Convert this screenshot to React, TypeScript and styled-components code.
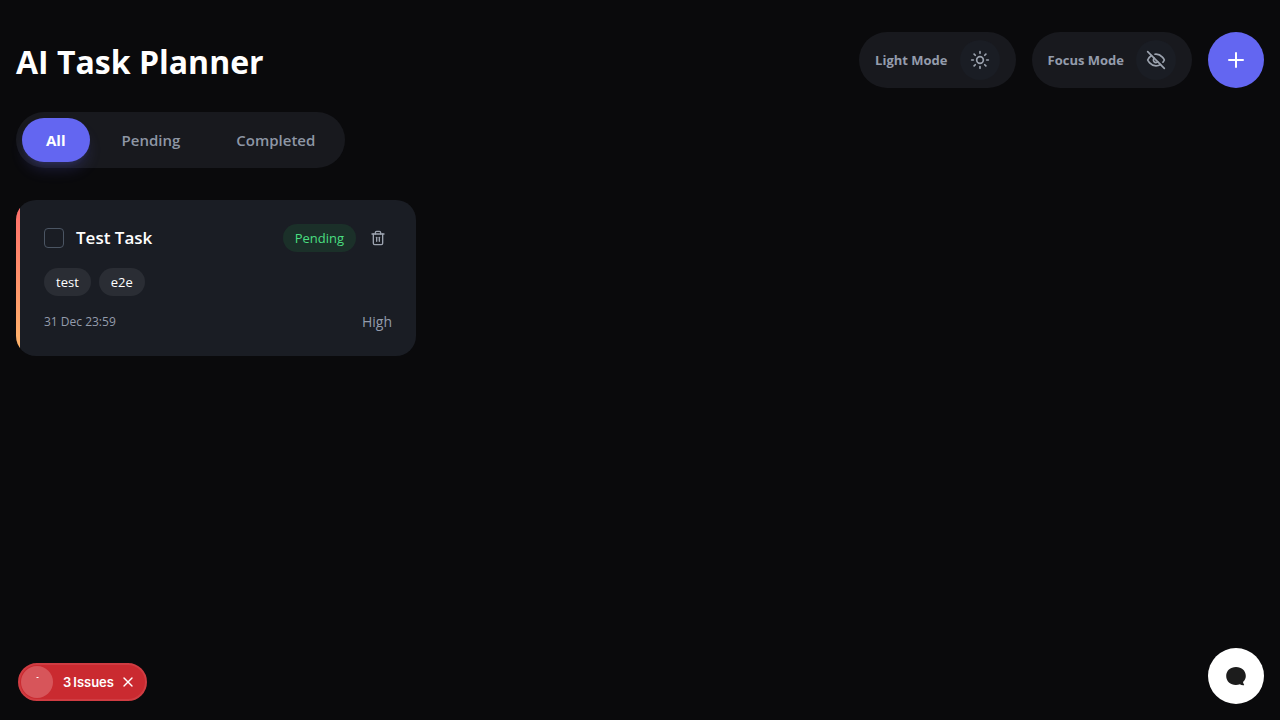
import React, { useState } from "react";
import styled, { createGlobalStyle } from "styled-components";
import { Plus, Sun, Trash2, X } from "lucide-react";

const GlobalStyle = createGlobalStyle`
  *, *::before, *::after { box-sizing: border-box; }
  body {
    margin: 0;
    background: #0a0a0c;
    color: #ffffff;
    font-family: "Segoe UI", "Open Sans", "Noto Sans", sans-serif;
    font-size: 16px;
  }
  button, input { font: inherit; color: inherit; }
  button { border: 0; padding: 0; background: none; cursor: pointer; }
`;

const Page = styled.main`
  padding: 32px 16px;
`;

const Header = styled.header`
  display: flex;
  align-items: center;
  justify-content: space-between;
  gap: 16px;
  margin-bottom: 24px;
`;

const Title = styled.h1`
  margin: 0;
  padding-top: 4px;
  font-size: 32px;
  line-height: 40px;
  font-weight: 700;
`;

const Actions = styled.div`
  display: flex;
  gap: 16px;
`;

const ModeToggle = styled.div`
  display: flex;
  align-items: center;
  gap: 12px;
  height: 56px;
  padding: 0 16px;
  border-radius: 28px;
  background: #18191e;
`;

const ModeLabel = styled.label`
  color: #949cac;
  font-size: 13px;
  line-height: 20px;
  font-weight: 700;
`;

const ModeButton = styled.button`
  display: grid;
  place-items: center;
  width: 40px;
  height: 40px;
  border-radius: 50%;
  background: #1a1d24;
  color: #9ca3af;
`;

const AddButton = styled.button`
  display: grid;
  place-items: center;
  width: 56px;
  height: 56px;
  border-radius: 50%;
  background: #6366f1;
`;

const Tabs = styled.nav`
  display: flex;
  width: fit-content;
  gap: 8px;
  padding: 6px;
  border-radius: 28px;
  background: #18191e;
`;

const Tab = styled.button<{ $active: boolean }>`
  height: 44px;
  padding: 0 24px;
  border-radius: 22px;
  font-size: 15px;
  font-weight: ${(p) => (p.$active ? 700 : 600)};
  color: ${(p) => (p.$active ? "#ffffff" : "#8e96a5")};
  background: ${(p) => (p.$active ? "#6366f1" : "transparent")};
  box-shadow: ${(p) =>
    p.$active
      ? "0 10px 15px -3px rgba(99, 102, 241, 0.2), 0 4px 6px -4px rgba(99, 102, 241, 0.2)"
      : "none"};
`;

const TaskGrid = styled.section`
  display: grid;
  grid-template-columns: repeat(auto-fill, minmax(360px, 1fr));
  gap: 24px;
  margin-top: 32px;
`;

const Card = styled.article`
  position: relative;
  overflow: hidden;
  padding: 24px 24px 24px 28px;
  border-radius: 20px;
  background: #1a1d24;
`;

const Accent = styled.span`
  position: absolute;
  inset: 0 auto 0 0;
  width: 4px;
  background: linear-gradient(#ff6b6b, #ffb86b);
`;

const CardHeader = styled.div`
  display: flex;
  align-items: center;
  gap: 8px;
  height: 28px;
`;

const TaskLabel = styled.label`
  display: flex;
  flex: 1;
  align-items: center;
  gap: 12px;
  font-size: 17px;
  line-height: 28px;
  font-weight: 600;
`;

const CheckBox = styled.input`
  appearance: none;
  width: 20px;
  height: 20px;
  margin: 0;
  border: 1px solid #4b5563;
  border-radius: 4px;
  &:checked {
    background: #6366f1;
  }
`;

const Pill = styled.span<{ $status?: boolean }>`
  padding: 4px 12px;
  border-radius: 14px;
  font-size: 13px;
  line-height: 20px;
  color: ${(p) => (p.$status ? "#4ade80" : "#ffffff")};
  background: ${(p) => (p.$status ? "#1b3029" : "#2a2d34")};
`;

const DeleteButton = styled.button`
  display: grid;
  place-items: center;
  width: 28px;
  height: 28px;
  color: #9ca3af;
`;

const Tags = styled.div`
  display: flex;
  gap: 8px;
  margin: 16px 0;
`;

const CardFooter = styled.div`
  display: flex;
  align-items: center;
  justify-content: space-between;
  color: #949cac;
  font-size: 14px;
  line-height: 20px;
`;

const Due = styled.time`
  font-size: 12px;
`;

const IssuesBadge = styled.div`
  position: fixed;
  left: 18px;
  bottom: 19px;
  display: flex;
  align-items: center;
  height: 38px;
  padding: 0 9px 0 1px;
  border: 2px solid #d03c42;
  border-radius: 19px;
  background: #ca2a30;
  font-family: Inter, sans-serif;
  font-size: 13px;
  font-weight: 600;
`;

const IssuesMark = styled.span`
  display: grid;
  place-items: center;
  width: 32px;
  height: 32px;
  margin-right: 10px;
  border-radius: 50%;
  background: #d7555a;
`;

const IssuesButton = styled.button`
  display: flex;
  gap: 2px;
  margin-right: 6px;
`;

const CloseButton = styled.button`
  display: grid;
  place-items: center;
`;

const ChatButton = styled.button`
  position: fixed;
  right: 16px;
  bottom: 16px;
  display: grid;
  place-items: center;
  width: 56px;
  height: 56px;
  border-radius: 50%;
  background: #ffffff;
`;

const EyeOffIcon = () => (
  <svg
    width="20"
    height="20"
    viewBox="0 0 24 24"
    fill="none"
    stroke="currentColor"
    strokeWidth="2"
    strokeLinecap="round"
    strokeLinejoin="round"
    aria-hidden="true"
  >
    <path d="M9.88 9.88a3 3 0 1 0 4.24 4.24" />
    <path d="M10.73 5.08A10.43 10.43 0 0 1 12 5c7 0 10 7 10 7a13.16 13.16 0 0 1-1.67 2.68" />
    <path d="M6.61 6.61A13.526 13.526 0 0 0 2 12s3 7 10 7a9.74 9.74 0 0 0 5.39-1.61" />
    <path d="M2 2l20 20" />
  </svg>
);

const ChatIcon = () => (
  <svg width="20" height="20" viewBox="0 0 20 20" fill="#1c1c1c" aria-hidden="true">
    <path d="M10 1C4.3 1 .2 4.8 .2 10s4.2 9 9.6 9c1.500 0 2.900-.3 4.100-.8 1.100.9 2.500 1.300 4 1.100.3 0 .4-.3.200-.5-.7-.9-1-1.900-1.100-2.700C18.800 14.500 19.800 12.400 19.800 10 19.800 4.800 15.700 1 10 1Z" />
  </svg>
);

const filters = ["All", "Pending", "Completed"];
const tags = ["test", "e2e"];

export default function App() {
  const [filter, setFilter] = useState("All");

  return (
    <>
      <GlobalStyle />
      <Page>
        <Header>
          <Title>AI Task Planner</Title>
          <Actions>
            <ModeToggle>
              <ModeLabel htmlFor="light-mode">Light Mode</ModeLabel>
              <ModeButton id="light-mode" type="button">
                <Sun size={20} />
              </ModeButton>
            </ModeToggle>
            <ModeToggle>
              <ModeLabel htmlFor="focus-mode">Focus Mode</ModeLabel>
              <ModeButton id="focus-mode" type="button">
                <EyeOffIcon />
              </ModeButton>
            </ModeToggle>
            <AddButton type="button" aria-label="Add task">
              <Plus size={24} />
            </AddButton>
          </Actions>
        </Header>

        <Tabs>
          {filters.map((name) => (
            <Tab key={name} type="button" $active={name === filter} onClick={() => setFilter(name)}>
              {name}
            </Tab>
          ))}
        </Tabs>

        <TaskGrid>
          <Card>
            <Accent />
            <CardHeader>
              <TaskLabel>
                <CheckBox type="checkbox" />
                Test Task
              </TaskLabel>
              <Pill $status>Pending</Pill>
              <DeleteButton type="button" aria-label="Delete task">
                <Trash2 size={16} />
              </DeleteButton>
            </CardHeader>
            <Tags>
              {tags.map((tag) => (
                <Pill key={tag}>{tag}</Pill>
              ))}
            </Tags>
            <CardFooter>
              <Due>31 Dec 23:59</Due>
              <span>High</span>
            </CardFooter>
          </Card>
        </TaskGrid>
      </Page>

      <IssuesBadge>
        <IssuesMark>
          <svg width="32" height="32" viewBox="0 0 32 32" aria-hidden="true">
            <path d="M15.5 11.500h2" stroke="#ffffff" />
          </svg>
        </IssuesMark>
        <IssuesButton type="button">
          <span>3</span>
          <span>Issues</span>
        </IssuesButton>
        <CloseButton type="button" aria-label="Dismiss issues">
          <X size={16} strokeWidth={2} />
        </CloseButton>
      </IssuesBadge>

      <ChatButton type="button" aria-label="Open chat">
        <ChatIcon />
      </ChatButton>
    </>
  );
}
